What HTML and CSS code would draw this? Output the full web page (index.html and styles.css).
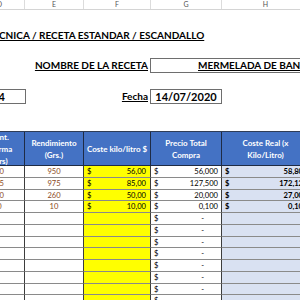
FILE: index.html
```html
<!DOCTYPE html>
<html lang="es">
<head>
<meta charset="utf-8">
<link rel="stylesheet" href="styles.css">
</head>
<body>
<div class="sheet">
  <div class="letters">
    <div class="letter">D</div>
    <div class="letter">E</div>
    <div class="letter">F</div>
    <div class="letter">G</div>
    <div class="letter">H</div>
  </div>

  <div class="title">CNICA / RECETA ESTANDAR / ESCANDALLO</div>

  <div class="line recipe">
    <div class="label"><span class="u">NOMBRE DE LA RECETA</span></div>
    <div class="box name"><span class="u">MERMELADA DE BANANA</span></div>
  </div>

  <div class="line dates">
    <div class="box num">4</div>
    <div class="spacer"></div>
    <div class="label"><span class="u">Fecha</span></div>
    <div class="box date">14/07/2020</div>
  </div>

  <div class="table">
    <div class="th">Cant.<br>Merma<br>(Grs)</div>
    <div class="th">Rendimiento<br>(Grs.)</div>
    <div class="th">Coste kilo/litro $</div>
    <div class="th">Precio Total<br>Compra</div>
    <div class="th last">Coste Real (x<br>Kilo/Litro)</div>

    <div class="td c brown">50</div><div class="td c brown">950</div>
    <div class="td y money"><span>$</span><span>56,00</span></div>
    <div class="td money g"><span>$</span><span>56,000</span></div>
    <div class="td b money h"><span>$</span><span>58,80</span></div>

    <div class="td c brown">25</div><div class="td c brown">975</div>
    <div class="td y money"><span>$</span><span>85,00</span></div>
    <div class="td money g"><span>$</span><span>127,500</span></div>
    <div class="td b money h"><span>$</span><span>172,12</span></div>

    <div class="td c brown">40</div><div class="td c brown">260</div>
    <div class="td y money"><span>$</span><span>50,00</span></div>
    <div class="td money g"><span>$</span><span>20,000</span></div>
    <div class="td b money h"><span>$</span><span>27,00</span></div>

    <div class="td c brown">0</div><div class="td c brown">10</div>
    <div class="td y money"><span>$</span><span>10,00</span></div>
    <div class="td money g"><span>$</span><span>0,100</span></div>
    <div class="td b money h"><span>$</span><span>0,10</span></div>

    <div class="td"></div><div class="td"></div><div class="td y"></div>
    <div class="td money g dash"><span>$</span><span>-</span></div><div class="td b"></div>
    <div class="td"></div><div class="td"></div><div class="td y"></div>
    <div class="td money g dash"><span>$</span><span>-</span></div><div class="td b"></div>
    <div class="td"></div><div class="td"></div><div class="td y"></div>
    <div class="td money g dash"><span>$</span><span>-</span></div><div class="td b"></div>
    <div class="td"></div><div class="td"></div><div class="td y"></div>
    <div class="td money g dash"><span>$</span><span>-</span></div><div class="td b"></div>
    <div class="td"></div><div class="td"></div><div class="td y"></div>
    <div class="td money g dash"><span>$</span><span>-</span></div><div class="td b"></div>
    <div class="td"></div><div class="td"></div><div class="td y"></div>
    <div class="td money g dash"><span>$</span><span>-</span></div><div class="td b"></div>
    <div class="td"></div><div class="td"></div><div class="td y"></div>
    <div class="td money g dash"><span>$</span><span>-</span></div><div class="td b"></div>
    <div class="td"></div><div class="td"></div><div class="td y"></div>
    <div class="td money g dash"><span>$</span><span>-</span></div><div class="td b"></div>
  </div>
</div>
</body>
</html>
```

FILE: styles.css
```css
* { box-sizing: border-box; }
html, body {
  margin: 0;
  padding: 0;
  width: 300px;
  height: 300px;
  overflow: hidden;
  background: #fff;
  font-family: Lato, "Open Sans", sans-serif;
  color: #000;
}
.sheet {
  margin-left: -25px;
  width: 335px;
}
.letters {
  display: grid;
  grid-template-columns: 50px 59px 67px 71px 88px;
  height: 10px;
  border-bottom: 1px solid #d4d4d4;
}
.letter {
  font-size: 7px;
  line-height: 9px;
  color: #555;
  text-align: center;
  border-right: 1px solid #dcdcdc;
}
.title {
  margin-top: 19px;
  padding-left: 24px;
  font-size: 10px;
  line-height: 12px;
  font-weight: 700;
  text-decoration: underline;
  white-space: nowrap;
}
.line {
  display: grid;
  grid-template-columns: 50px 59px 67px 71px 88px;
  height: 15px;
}
.recipe { margin-top: 17px; }
.dates { margin-top: 16px; }
.label {
  font-size: 10px;
  font-weight: 700;
  line-height: 15px;
  text-align: right;
  padding-right: 3px;
  white-space: nowrap;
}
.recipe .label { grid-column: 1 / 4; }
.u { text-decoration: underline; }
.box {
  border: 1px solid #6e6e6e;
  font-weight: 700;
  line-height: 13px;
  white-space: nowrap;
  overflow: hidden;
}
.name {
  grid-column: 4 / 6;
  margin-left: -1px;
  font-size: 10px;
  padding-left: 47px;
}
.num {
  font-size: 11px;
  text-align: right;
  padding-right: 20px;
  width: 51px;
}
.date {
  margin-left: -1px;
  width: 72px;
  font-size: 11px;
  text-align: center;
}
.table {
  margin-top: 27px;
  display: grid;
  grid-template-columns: 50px 59px 67px 71px 88px;
  grid-template-rows: 34px;
  grid-auto-rows: 11.75px;
  border-top: 1px solid #2f3d57;
}
.th {
  background: #4472c4;
  color: #fff;
  font-weight: 700;
  font-size: 8px;
  line-height: 12px;
  display: flex;
  align-items: center;
  justify-content: center;
  text-align: center;
  border-right: 1px solid #1e2b45;
  border-bottom: 1px solid #1e2b45;
  white-space: nowrap;
}
.td {
  font-size: 7.6px;
  line-height: 10.5px;
  border-right: 1px solid #3d3d3d;
  border-bottom: 1px solid #8a8a8a;
  white-space: nowrap;
  overflow: hidden;
}
.c { text-align: center; }
.brown { color: #8b4a1c; }
.y { background: #ffff00; }
.b { background: #d9e1f2; font-weight: 700; }
.money {
  display: flex;
  justify-content: space-between;
  padding: 0 4px 0 3px;
}
.g { padding: 0 3px 0 3px; }
.dash { padding-right: 17px; }
.h { padding: 0 6px 0 3px; }
```
